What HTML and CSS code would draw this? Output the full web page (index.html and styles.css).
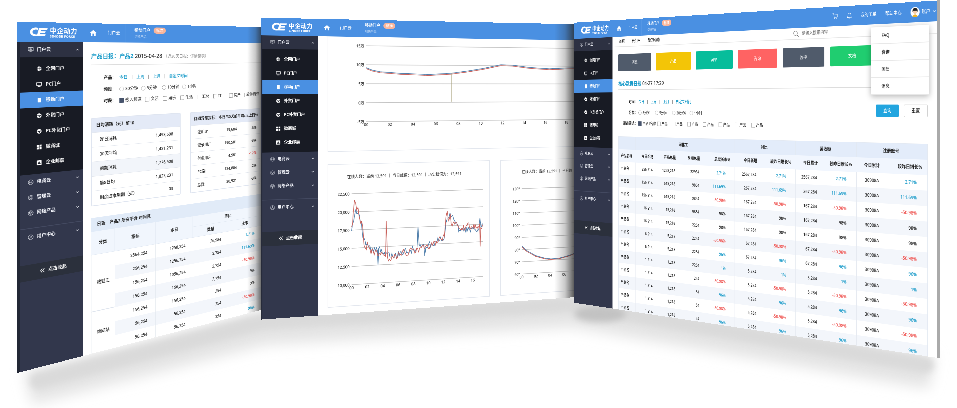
FILE: index.html
```html
<!DOCTYPE html>
<html lang="zh-CN">
<head>
<meta charset="utf-8">
<title>中企动力 门户云</title>
<link rel="stylesheet" href="styles.css">
</head>
<body>
<svg class="sprite" aria-hidden="true">
  <symbol id="i-logo" viewBox="0 0 46 30"><path d="M22 5C10 1 2 8 2 15s8 13 20 9l2-4C14 23 8 20 8 15s6-8 14-5z"/><path d="M24 5h21l-2 5H29l-1 3h12l-2 4H27l-1 3h14l-2 5H18z"/></symbol>
  <symbol id="i-home" viewBox="0 0 16 16"><path d="M8 1L0 8h2v7h4v-5h4v5h4V8h2z"/></symbol>
  <symbol id="i-desk" viewBox="0 0 16 16"><path class="ln" d="M1 2h14v9H1zM4 14h8M8 11v3M5 5h3v3H5zM10 5v4"/></symbol>
  <symbol id="i-globe" viewBox="0 0 16 16"><circle cx="8" cy="8" r="7"/><path class="cut" d="M8 1v14M1 8h14M4 2q-3 6 0 12M12 2q3 6 0 12"/></symbol>
  <symbol id="i-pc" viewBox="0 0 16 16"><path class="ln thick" d="M1 3h14v8H1zM4 14h8"/></symbol>
  <symbol id="i-phone" viewBox="0 0 16 16"><rect x="4" y="1" width="9" height="14" rx="1"/></symbol>
  <symbol id="i-trade" viewBox="0 0 16 16"><circle cx="8" cy="8" r="7"/><path class="cut thick" d="M3 6l4 3 6-2M8 9l2 4"/></symbol>
  <symbol id="i-grid" viewBox="0 0 16 16"><path d="M1 1h6v6H1zM9 1h6v6H9zM1 9h6v6H1zM9 9h6v6H9z"/></symbol>
  <symbol id="i-mail" viewBox="0 0 16 16"><rect x="1" y="1" width="14" height="14" rx="1"/><path class="cut thick" d="M5 11l3-5 3 5z"/></symbol>
  <symbol id="i-shop" viewBox="0 0 16 16"><circle class="ln" cx="8" cy="8" r="7"/><path class="ln" d="M5 4v8M11 4v8M2 8h12"/></symbol>
  <symbol id="i-gear" viewBox="0 0 16 16"><path class="ln" d="M8 1l6 3v8l-6 3-6-3V4z"/><circle class="ln" cx="8" cy="8" r="3"/></symbol>
  <symbol id="i-box" viewBox="0 0 16 16"><circle class="ln" cx="8" cy="8" r="7"/><path class="ln" d="M4 6l4-2 4 2v4l-4 2-4-2zM4 6l4 2 4-2M8 8v4"/></symbol>
  <symbol id="i-user" viewBox="0 0 16 16"><circle class="ln" cx="8" cy="8" r="7"/><circle class="ln" cx="8" cy="6" r="2"/><path class="ln" d="M4 12q4-5 8 0"/></symbol>
  <symbol id="i-down" viewBox="0 0 16 16"><path class="ln thick" d="M3 6l5 5 5-5"/></symbol>
  <symbol id="i-up" viewBox="0 0 16 16"><path class="ln thick" d="M3 11l5-5 5 5"/></symbol>
  <symbol id="i-fold" viewBox="0 0 16 16"><path class="ln thick" d="M8 2L3 8l5 6M14 2L9 8l5 6"/></symbol>
  <symbol id="i-cart" viewBox="0 0 16 16"><path class="ln" d="M0 1h3l2 9h8l2-6H4"/><circle cx="6" cy="13" r="1"/><circle cx="12" cy="13" r="1"/></symbol>
  <symbol id="i-bell" viewBox="0 0 16 16"><path class="ln" d="M2 12h12l-2-3V6q0-4-4-4T4 6v3zM6 14h4"/></symbol>
  <symbol id="i-find" viewBox="0 0 16 16"><circle class="ln" cx="7" cy="7" r="5"/><path class="ln" d="M11 11l4 4"/></symbol>
  <symbol id="i-face" viewBox="0 0 24 24"><circle cx="12" cy="12" r="12" fill="#fff"/><path d="M5 10q0-8 7-8t7 8l-2 3-10 0z" fill="#222"/><path d="M7 9h10v4q-5 7-10 0z" fill="#f4cfae"/><path d="M5 22q7-9 14 0-7 4-14 0z" fill="#f0b429"/></symbol>
</svg>

<main class="stage">
  <svg class="floor" viewBox="0 0 957 408" aria-hidden="true">
    <defs><filter id="soft" x="-10%" y="-50%" width="120%" height="200%"><feGaussianBlur stdDeviation="7"/></filter>
    <filter id="softer" x="-10%" y="-50%" width="120%" height="200%"><feGaussianBlur stdDeviation="3"/></filter></defs>
    <path class="haze" filter="url(#soft)" d="M28 388L262 328 572 310 932 372"/>
    <path class="core" filter="url(#softer)" d="M38 381L262 322 572 304 926 365"/>
    <ellipse class="pool" filter="url(#softer)" cx="600" cy="314" rx="26" ry="8"/>
  </svg>

  <section class="panel panel-left">
    <header class="bar" data-bar></header>
    <div class="body">
      <nav class="side" data-side></nav>
      <div class="content content-left">
        <h2 class="title"><b>产品日报：产品2</b> 2015-04-28 <small>（近30天日报：详情见表）</small></h2>
        <form class="filters" data-filters="a"></form>
        <div class="cards">
          <table class="card">
            <thead><tr><th colspan="2">日均消耗（元）前10</th></tr></thead>
            <tbody>
              <tr><td>昨日消耗</td><td>1,493,508</td></tr>
              <tr><td>30天平均</td><td>1,421,231</td></tr>
              <tr><td>前期消耗</td><td>1,776,508</td></tr>
              <tr><td>前8日均</td><td>1,823,231</td></tr>
              <tr><td>剩余成本周期（天）</td><td>03</td></tr>
            </tbody>
          </table>
          <table class="card">
            <thead><tr><th colspan="3">订阅异常指标：本日/30天前平均/以上日%</th></tr></thead>
            <tbody>
              <tr><td>注册IP</td><td>19,604</td><td>-6%</td></tr>
              <tr><td>登录用户</td><td>190,501</td><td>-3%</td></tr>
              <tr><td>付费用户</td><td>4,581</td><td class="down">-12%</td></tr>
              <tr><td>PC端</td><td>124,804</td><td>-2%</td></tr>
              <tr><td>总数</td><td>30,521</td><td>-3%</td></tr>
            </tbody>
          </table>
        </div>
        <table class="grid grid-left">
          <caption>日表　产品2 所有平台 时间区</caption>
          <thead>
            <tr><th rowspan="2">分类</th><th rowspan="2">指标</th><th rowspan="2">本日</th><th colspan="2">环比</th></tr>
            <tr><th>数量</th><th>比率</th></tr>
          </thead>
          <tbody id="rows-left"></tbody>
        </table>
      </div>
    </div>
    <div class="shade"></div>
  </section>

  <section class="panel panel-mid">
    <header class="bar" data-bar></header>
    <div class="body">
      <nav class="side" data-side></nav>
      <div class="content content-mid">
        <figure class="chart chart-wide"><svg id="chart-wide" viewBox="0 0 820 347"></svg></figure>
        <div class="chart-row">
          <figure class="chart">
            <figcaption>在线人数：当前 13,591 ｜ 当日峰值：13,591 ｜ 历史峰值为：13,591</figcaption>
            <svg id="chart-online" viewBox="0 0 520 352"></svg>
          </figure>
          <figure class="chart">
            <figcaption>在线人数：当前 13,591 ｜ 当日峰</figcaption>
            <svg id="chart-temp" viewBox="0 0 520 352"></svg>
          </figure>
        </div>
      </div>
    </div>
    <div class="shade"></div>
  </section>

  <section class="panel panel-right">
    <header class="bar" data-bar="tools"></header>
    <div class="body">
      <nav class="side" data-side></nav>
      <div class="content content-right">
        <div class="tabs"><a href="#">首页</a><a href="#">云门户</a><a href="#">新的动态</a>
          <label class="search"><svg class="ico"><use href="#i-find"/></svg><input type="text" placeholder="请输入搜索内容" aria-label="搜索"></label></div>
        <div class="inner">
          <div class="tiles">
            <button class="t-slate">消息</button><button class="t-gold">产品</button><button class="t-teal">APP</button><button class="t-red">咨询</button><button class="t-slate">监控</button><button class="t-green">文档</button>
          </div>
          <h2 class="title"><b>核心数据日报</b> 04-27 17:29</h2>
          <div class="filter-line">
            <form class="filters" data-filters="b"></form>
            <div class="actions"><button class="go">查询</button><button>重置</button></div>
          </div>
          <table class="grid grid-right">
            <colgroup><col><col><col><col><col><col><col><col><col><col><col></colgroup>
            <thead>
              <tr><th></th><th colspan="4">网化工</th><th colspan="2">对比</th><th colspan="2">营收额</th><th colspan="2">注册账号</th></tr>
              <tr><th>产品名称</th><th>今日新增</th><th>产品总量</th><th>前期总量</th><th>总增长率%</th><th>今日新增</th><th>较昨日增长%</th><th>今日累计</th><th>较昨日增长%</th><th>今日累计</th><th>较昨日增长%</th></tr>
            </thead>
            <tbody id="rows-right"></tbody>
          </table>
        </div>
        <ul class="drop"><li><a href="#">FAQ</a></li><li><a href="#">咨询</a></li><li><a href="#">回复</a></li><li><a href="#">消息</a></li></ul>
      </div>
      <div class="rail"></div>
    </div>
  </section>
</main>
<script src="script.js"></script>
</body>
</html>
```
FILE: styles.css
```css
* { box-sizing: border-box; }
body { margin: 0; background: #fff; font: 500 12px/1.5 "Noto Sans", "Noto Sans CJK SC", sans-serif; color: #222; }
h2, figure, ul { margin: 0; padding: 0; }
a { color: inherit; text-decoration: none; }
button, input { font: inherit; }
.sprite { position: absolute; width: 0; height: 0; }
.ln { fill: none; stroke: currentColor; stroke-width: 1; }
.cut { fill: none; stroke: #181b24; stroke-width: 1; }
.thick { stroke-width: 2; }
.ico { width: 14px; height: 14px; fill: currentColor; flex: none; }

.stage { position: relative; height: 100vh; overflow: hidden; }
.floor { position: absolute; left: 0; top: 0; width: 957px; height: 408px; fill: none; }
.haze { stroke: #e4e4e4; stroke-width: 34; }
.core { stroke: #dadada; stroke-width: 16; stroke-linecap: round; }
.pool { fill: #c2c2c2; }

/* Each screen is drawn flat, then stood up in perspective. */
.panel { position: absolute; left: 0; top: 0; display: flex; flex-direction: column; overflow: hidden; background: #fff; transform-origin: 0 0; }
.panel-left { width: 748px; height: 904px; transform: matrix3d(.41557, .01621, 0, .0003275, 0, .3887, 0, 0, 0, 0, 1, 0, 17, 21.63, 0, 1); }
.panel-mid { width: 1024px; height: 888px; transform: matrix3d(.36717, .00895, 0, .0001041, 0, .34, 0, 0, 0, 0, 1, 0, 261, 17.66, 0, 1); }
.panel-right { width: 1302px; height: 896px; transform: matrix3d(.12397, -.01723, 0, -.0001673, 0, .3125, 0, 0, 0, 0, 1, 0, 574, 22.69, 0, 1); }
.shade { position: absolute; top: 0; right: 0; bottom: 0; width: 60px; background: linear-gradient(to right, rgba(40, 40, 40, 0), rgba(40, 40, 40, .25) 50%, rgba(40, 40, 40, .85)); }
.panel-mid .shade { width: 76px; }

.bar { flex: none; display: flex; align-items: center; height: 52px; background: #4a90e2; color: #fff; }
.logo { display: flex; align-items: center; gap: 4px; width: 170px; padding-left: 30px; }
.logo svg { width: 48px; height: 34px; fill: #fff; }
.logo b { display: block; font-size: 18px; line-height: 20px; }
.logo small { display: block; font-size: 9px; line-height: 9px; font-weight: 700; white-space: nowrap; }
.home { display: flex; justify-content: center; width: 56px; }
.home svg { width: 18px; height: 18px; }
.crumb { padding: 0 16px 0 12px; border-right: 2px solid #5b9be6; line-height: 52px; }
.here { display: flex; gap: 10px; padding-left: 24px; }
.here b, .here small { display: block; line-height: 18px; }
.here b { font-weight: 600; }
.here small { font-size: 9px; opacity: .6; }
.pill { align-self: flex-start; padding: 0 8px; border-radius: 9px; background: #f9b59b; font-size: 11px; line-height: 18px; }
.tools { display: flex; align-items: center; gap: 26px; margin-left: auto; padding-right: 10px; }
.tools .ico { width: 18px; height: 18px; }
.tools .me { display: flex; align-items: center; gap: 6px; }
.tools .me svg:first-child { width: 26px; height: 26px; }
.tools .me svg:last-child { width: 12px; height: 12px; }

.body { flex: 1; display: flex; min-height: 0; }
.side { flex: none; width: 170px; background: #32374c; color: #f0f2f8; font-weight: 600; }
.panel-left .side { border-left: 8px solid #222735; }
.panel-mid .side { border-left: 4px solid #272b3a; }
.side a { display: flex; align-items: center; gap: 8px; height: 40px; padding: 0 10px 0 27px; }
.side a .arrow { width: 10px; height: 10px; margin-left: auto; }
.panel-left .side a { padding-left: 19px; }
.panel-mid .side a { padding-left: 23px; }
.side .open { background: #2d3142; }
.sub { padding: 9px 0; background: #181b24; color: #fff; }
.panel .side .sub a { height: 41px; padding-left: 46px; gap: 10px; }
.panel-left .side .sub a, .panel-mid .side .sub a { padding-left: 40px; }
.sub .on { background: #4a90e2; }
.side hr { height: 2px; margin: 19px 0 2px; border: 0; background: #434960; }
.panel .side .fold { height: 42px; margin-top: 51px; padding-left: 48px; background: #2b303c; color: #fff; }

.content { flex: 1; min-width: 0; position: relative; }
.title { padding: 20px 0 3px; border-bottom: 2px solid #ddd; font-size: 16px; line-height: 36px; font-weight: 500; white-space: nowrap; }
.title b { color: #1a9bc9; font-weight: 700; }
.title small { font-size: 12px; color: #999; }
.filters { padding-top: 19px; }
.frow { display: flex; align-items: center; height: 32px; padding-left: 35px; white-space: nowrap; }
.frow > span { width: 45px; font-weight: 600; }
.frow label { display: flex; align-items: center; gap: 4px; width: 64px; color: #444; }
.frow.checks label { width: 55px; }
.frow.checks label.wide { width: 76px; }
.frow a { color: #1a9bc9; margin-right: 12px; }
.frow i { width: 2px; height: 12px; margin-right: 12px; background: #999; }
.frow input { appearance: none; width: 13px; height: 13px; margin: 0; border: 1px solid #999; background: #fff; }
.frow input[type=radio] { border-radius: 50%; }
.frow input:checked { border-color: #46536b; background: #46536b; }

.content-left { padding-left: 22px; }
.cards { display: grid; grid-template-columns: 267px 240px; gap: 31px; margin-top: 29px; }
table { border-collapse: separate; border-spacing: 0; }
.card { border: 2px solid #dfe5f0; border-radius: 4px; white-space: nowrap; }
.card th { height: 38px; padding: 0 12px; background: #e4eaf7; text-align: left; font-weight: 600; }
.card:last-child th { padding: 0 6px 0 10px; }
.card td { height: 40px; padding: 0 22px; border-top: 1px solid #e3e7ee; text-align: right; }
.card:last-child td:last-child { padding-right: 12px; }
.card td:first-child { text-align: left; }
.card:first-child tr:nth-child(3) td { background: #f2f5fa; }
.grid { table-layout: fixed; }
.grid th { background: #f1f6fd; font-weight: 600; border-right: 2px solid #e2e9f3; }
.grid td { height: 39px; padding: 0; text-align: right; white-space: nowrap; }
.grid .up { color: #1a9bc9; }
.grid .down, .card .down { color: #ef5350; }

.grid-left { width: 548px; margin-top: 32px; }
.grid-left caption { height: 38px; padding-left: 16px; background: #e1ebf8; text-align: left; line-height: 38px; font-weight: 600; }
.grid-left th { height: 32px; border-bottom: 1px solid #e2e9f3; }
.grid-left th:first-child { width: 68px; }
.grid-left tr:nth-child(2) th:first-child { width: auto; }
.grid-left td { padding-right: 24px; border-right: 1px solid #e2e7ee; }
.grid tr:nth-child(even) td { background: #f3f6fb; }
.grid-left tr td.group { padding: 0; text-align: center; background: #fff; border-bottom: 2px solid #dfe5ee; border-left: 1px solid #e2e7ee; }

.content-mid { padding: 0 0 22px 30px; }
.chart { border: 2px solid #e3e7ee; }
.chart svg { display: block; }
.chart-wide { border-top: 0; width: 824px; }
.chart-wide svg { width: 820px; height: 345px; }
.chart-row { display: grid; grid-template-columns: 524px 524px; gap: 35px; margin-top: 37px; }
.chart-row svg { width: 520px; height: 352px; }
.chart figcaption { height: 75px; padding: 28px 0 0 58px; line-height: 20px; color: #444; white-space: nowrap; }
.chart-row .chart:last-child figcaption { padding-left: 72px; }
.rule { stroke: #c4c4c4; stroke-width: 2; }
.tick { fill: #333; font-size: 12px; }
.line { fill: none; stroke-width: 2; }
.red { stroke: #c8605a; }
.blue { stroke: #4f7eab; }
.peak { stroke: #a39a72; stroke-width: 2; }

.tabs { display: flex; align-items: center; gap: 30px; height: 32px; padding: 0 26px 0 28px; border-bottom: 2px solid #e6e6e6; }
.search { display: flex; align-items: center; gap: 10px; width: 262px; margin-left: auto; margin-right: 152px; color: #555; }
.search .ico { width: 20px; height: 20px; }
.search input { width: 150px; border: 0; background: none; padding: 0; }
.inner { padding: 22px 26px 0 25px; }
.tiles { display: grid; grid-template-columns: repeat(6, 137px); gap: 19px; }
.tiles button { height: 53px; border: 0; border-radius: 3px; color: #fff; }
.tiles .t-slate { background: #505b6b; }
.tiles .t-gold { background: #f3c507; }
.tiles .t-teal { background: #07bd9b; }
.tiles .t-red { background: #ff6363; }
.tiles .t-green { background: #20cd70; }
.content-right .title { padding: 20px 0 0; }
.filter-line { display: flex; align-items: center; justify-content: space-between; }
.content-right .filters { padding-top: 20px; }
.content-right .frow { height: 33px; padding-left: 20px; }
.content-right .frow > span { width: 64px; text-align: right; padding-right: 4px; }
.content-right .frow label { width: 68px; }
.content-right .frow.checks label { width: 59px; }
.content-right .frow.checks label.wide { width: 77px; }
.actions { display: flex; gap: 15px; }
.actions button { width: 68px; height: 32px; padding: 0; border: 1px solid #ccc; border-radius: 3px; background: #fff; }
.actions .go { border-color: #22a5df; background: #22a5df; color: #fff; }
.grid-right { width: 100%; margin-top: 24px; border: 1px solid #e3e9f2; }
.grid-right col:nth-child(1) { width: 73px; }
.grid-right col:nth-child(2) { width: 86px; }
.grid-right col:nth-child(3) { width: 90px; }
.grid-right col:nth-child(4) { width: 93px; }
.grid-right col:nth-child(5) { width: 112px; }
.grid-right col:nth-child(6) { width: 96px; }
.grid-right col:nth-child(7) { width: 116px; }
.grid-right col:nth-child(8) { width: 88px; }
.grid-right col:nth-child(9) { width: 108px; }
.grid-right col:nth-child(10) { width: 85px; }
.grid-right th { height: 39px; padding: 0; background: #e3ecfa; }
.grid-right tr:nth-child(2) th { border-right: 0; background: #f1f6fe; text-align: right; padding-right: 15px; white-space: nowrap; }
.grid-right td { padding-right: 18px; }
.grid-right td:first-child { padding-right: 26px; }
.grid-right td:nth-child(5), .grid-right td:nth-child(7), .grid-right td:nth-child(9), .grid-right td:nth-child(11) { padding-right: 30px; }
.grid-right td:nth-child(1), .grid-right td:nth-child(5), .grid-right td:nth-child(7), .grid-right td:nth-child(9) { border-right: 2px solid #e6eaf1; }
.drop { position: absolute; top: 8px; right: 22px; width: 170px; list-style: none; background: #fff; box-shadow: 0 4px 16px rgba(0, 0, 0, .3); }
.drop li { height: 44px; padding-left: 32px; border-bottom: 2px solid #e8e8e8; line-height: 44px; }
.rail { flex: none; width: 9px; margin-top: -52px; background: #aaa; z-index: 1; }
```
FILE: script.js
```js
const icon = (id, cls = "ico") => `<svg class="${cls}" aria-hidden="true"><use href="#i-${id}"/></svg>`;

const sub = [["globe", "全网门户"], ["pc", "PC门户"], ["phone", "移动门户"], ["trade", "外贸门户"], ["trade", "PC外贸门户"], ["grid", "微商城"], ["mail", "企业邮局"]];
const top3 = [["shop", "电商云"], ["gear", "管理云"], ["box", "网络产品"]];
const item = ([i, t]) => `<a href="#">${icon(i)}${t}${icon("down", "ico arrow")}</a>`;

document.querySelectorAll("[data-side]").forEach(el => {
  el.innerHTML = `<a href="#" class="open">${icon("desk")}门户云${icon("up", "ico arrow")}</a>
    <div class="sub">${sub.map(([i, t], n) => `<a href="#"${n === 2 ? ' class="on"' : ""}>${icon(i)}${t}</a>`).join("")}</div>
    ${top3.map(item).join("")}<hr>${item(["user", "用户中心"])}
    <a href="#" class="fold">${icon("fold")}点击收起</a>`;
});

document.querySelectorAll("[data-bar]").forEach(el => {
  el.innerHTML = `<a href="#" class="logo">${icon("logo", "")}<span><b>中企动力</b><small>SINOBB FORCE</small></span></a>
    <a href="#" class="home" aria-label="首页">${icon("home")}</a><a href="#" class="crumb">门户云</a>
    <div class="here"><span><b>移动门户</b><small>切换产品</small></span><span class="pill">标准</span></div>` +
    (el.dataset.bar ? `<div class="tools">${icon("cart")}${icon("bell")}<a href="#">我的工单</a><a href="#">帮助中心</a><a href="#" class="me">${icon("face")}账户${icon("down", "ico")}</a></div>` : "");
});

const filterSets = {
  a: { names: ["产品：", "频度：", "时段："], links: ["今日", "上周", "上月", "自定义时间"], radios: ["30分钟", "5分钟", "10分钟", "1小时"], checks: ["嵌入频道", "文艺", "娱乐", "生活", "汇总", "IT", "房产", "软件资讯"] },
  b: { names: ["时间：", "分类：", "渠道筛选："], links: ["今日", "上周", "上月", "自定义时间"], radios: ["5分钟", "5分钟", "30分钟", "1小时"], checks: ["产品1名称", "产品", "产品", "产品", "产品", "产品", "产品", "产品"] }
};
document.querySelectorAll("[data-filters]").forEach(el => {
  const k = el.dataset.filters, f = filterSets[k];
  el.innerHTML = `<div class="frow"><span>${f.names[0]}</span>${f.links.map(t => `<a href="#">${t}</a>`).join("<i></i>")}</div>
    <div class="frow"><span>${f.names[1]}</span>${f.radios.map(t => `<label><input type="radio" name="freq-${k}">${t}</label>`).join("")}</div>
    <div class="frow checks"><span>${f.names[2]}</span>${f.checks.map((t, n) => `<label${n ? "" : ' class="wide"'}><input type="checkbox"${n ? "" : " checked"}>${t}</label>`).join("")}</div>`;
});

const tone = v => v.startsWith("-") ? "down" : ["9%", "98%"].includes(v) ? "" : "up";
const left = [["2564,254", "1258,254", "26,984", "1.71%"], ["256,254", "1256,254", "2,784", "111.69%"], ["156,254", "1056,254", "2,754", "-50.98%"], ["156,254", "156,254", "2,754", "9%"],
  ["156,254", "156,254", "254", "9%"], ["56,254", "56,254", "254", "-50.98%"], ["56,254", "56,254", "254", "96%"]];
document.getElementById("rows-left").innerHTML = left.map((r, n) =>
  `<tr>${n % 4 ? "" : `<td class="group" rowspan="4">${n ? "新网站" : "搜狐汇"}</td>`}${r.map((v, c) => `<td class="${c === 3 ? tone(v) : ""}">${v}</td>`).join("")}</tr>`).join("");

const rates = ["2.71%", "111.69%", "-50.98%", "98%", "98%", "-50.98%", "96%", "1%", "-50.98%", "96%", "-50.98%", "96%"];
const today = ["256,214", "156,214", "156,214", "16,214", "16,214", "6,214", "6,214", "1,214", "1,214", "1,214", "1,214", "1,214"];
const total = ["1258,218", "615,218", "615,218", "15,218", "15,218", "5,218", "5,218", "1,218", "1,218", "1,218", "1,218", "1,218"];
const prior = ["22984", "9854", "9854", "9854", "2254", "2254", "2254", "2254", "254", "54", "54", "54"];
const sales = ["2567,284", "267,284", "167,284", "167,284", "167,284", "67,284", "67,284", "5,284", "5,284", "5,284", "5,284", "5,284"];
document.getElementById("rows-right").innerHTML = rates.map((p, n) => {
  const rate = `<td class="${tone(p)}">${p}</td>`;
  return `<tr><td>产品名</td><td>${today[n]}</td><td>${total[n]}</td><td>${prior[n]}</td>${rate}<td>${sales[n]}</td>${rate}<td>${sales[n]}</td>${rate}<td>30908A</td>${rate}</tr>`;
}).join("");

/* Charts: horizontal rules with labels, then the series as polylines. */
function axes(x0, x1, y0, step, labels, tick, count) {
  const n = labels.length;
  let s = labels.map((t, i) => `<path class="rule" d="M${x0} ${y0 + i * step}H${x1}"/><text class="tick" text-anchor="end" x="${x0 - 6}" y="${y0 + 5 + i * step}">${t}</text>`).join("");
  for (let i = 0; i < count; i++)
    s += `<text class="tick" text-anchor="middle" x="${x0 + i * tick}" y="${y0 + 14 + (n - 1) * step}">${String(i * 2).padStart(2, "0")}</text>`;
  return s;
}
const line = (pts, cls) => `<polyline class="line ${cls}" points="${pts.map(p => p.join(",")).join(" ")}"/>`;
function rough(keys, seed, amp) {
  const out = [];
  let r = seed;
  for (let i = 0; i < keys.length - 1; i++) {
    const [xa, ya] = keys[i], [xb, yb] = keys[i + 1];
    const n = Math.max(1, Math.round((xb - xa) / 3));
    for (let j = 0; j < n; j++) {
      r = (r * 16807) % 2147483647;
      const k = j ? (r / 2147483647 - 0.5) * amp : 0;
      out.push([Math.round(xa + (xb - xa) * j / n), Math.round(ya + (yb - ya) * j / n + k)]);
    }
  }
  out.push(keys[keys.length - 1]);
  return out;
}
const shift = (pts, dx, dy) => pts.map(([x, y]) => [x + dx, y + dy]);

const wide = [[116, 94], [135, 101], [160, 106], [230, 111], [320, 114], [390, 110], [450, 102], [500, 94], [560, 82], [600, 83], [660, 90], [730, 94], [820, 90]];
document.getElementById("chart-wide").innerHTML =
  axes(116, 820, 27, 58, ["15万", "10万", "5万", "0万", "-5万"], 75, 10) + line(wide, "blue") + line(shift(wide, 0, 3), "red") + `<path class="peak" d="M392 110V199"/>`;

const red = [[0, 100], [5, 60], [9, 20], [13, 30], [16, 50], [20, 42], [26, 80], [31, 84], [36, 115], [39, 158], [52, 160], [58, 172], [80, 182], [100, 190], [107, 195], [109, 86], [113, 198], [130, 196], [170, 188], [210, 176], [250, 172], [275, 160], [297, 146], [303, 80], [307, 64], [312, 95], [317, 75], [323, 112], [335, 102], [350, 122], [370, 112], [390, 120], [410, 116], [415, 108], [417, 180], [419, 120], [425, 112]];
const blue = [[0, 112], [6, 85], [13, 48], [22, 62], [30, 85], [38, 142], [50, 156], [60, 172], [81, 176], [83, 222], [85, 170], [100, 186], [130, 198], [165, 186], [208, 174], [211, 108], [215, 168], [230, 164], [233, 200], [237, 172], [270, 158], [297, 148], [306, 90], [316, 70], [328, 90], [340, 106], [345, 130], [360, 128], [390, 122], [412, 128], [416, 90], [420, 120], [425, 108]];
document.getElementById("chart-online").innerHTML =
  axes(72, 498, 14, 55, ["22,500", "20,000", "17,500", "15,000", "12,500", "10,000"], 49, 9) +
  line(shift(rough(blue, 77, 20), 72, 14), "blue") + line(shift(rough(red, 4242, 24), 72, 14), "red");

const temp = [[74, 200], [90, 215], [122, 233], [155, 243], [175, 246], [205, 245], [240, 238], [280, 225]];
document.getElementById("chart-temp").innerHTML =
  axes(72, 498, 16, 39, ["130°", "120°", "110°", "100°", "90°", "80°", "70°", "60°"], 50, 4) + line(temp, "blue") + line(shift(temp, -1, 2), "red");
```
